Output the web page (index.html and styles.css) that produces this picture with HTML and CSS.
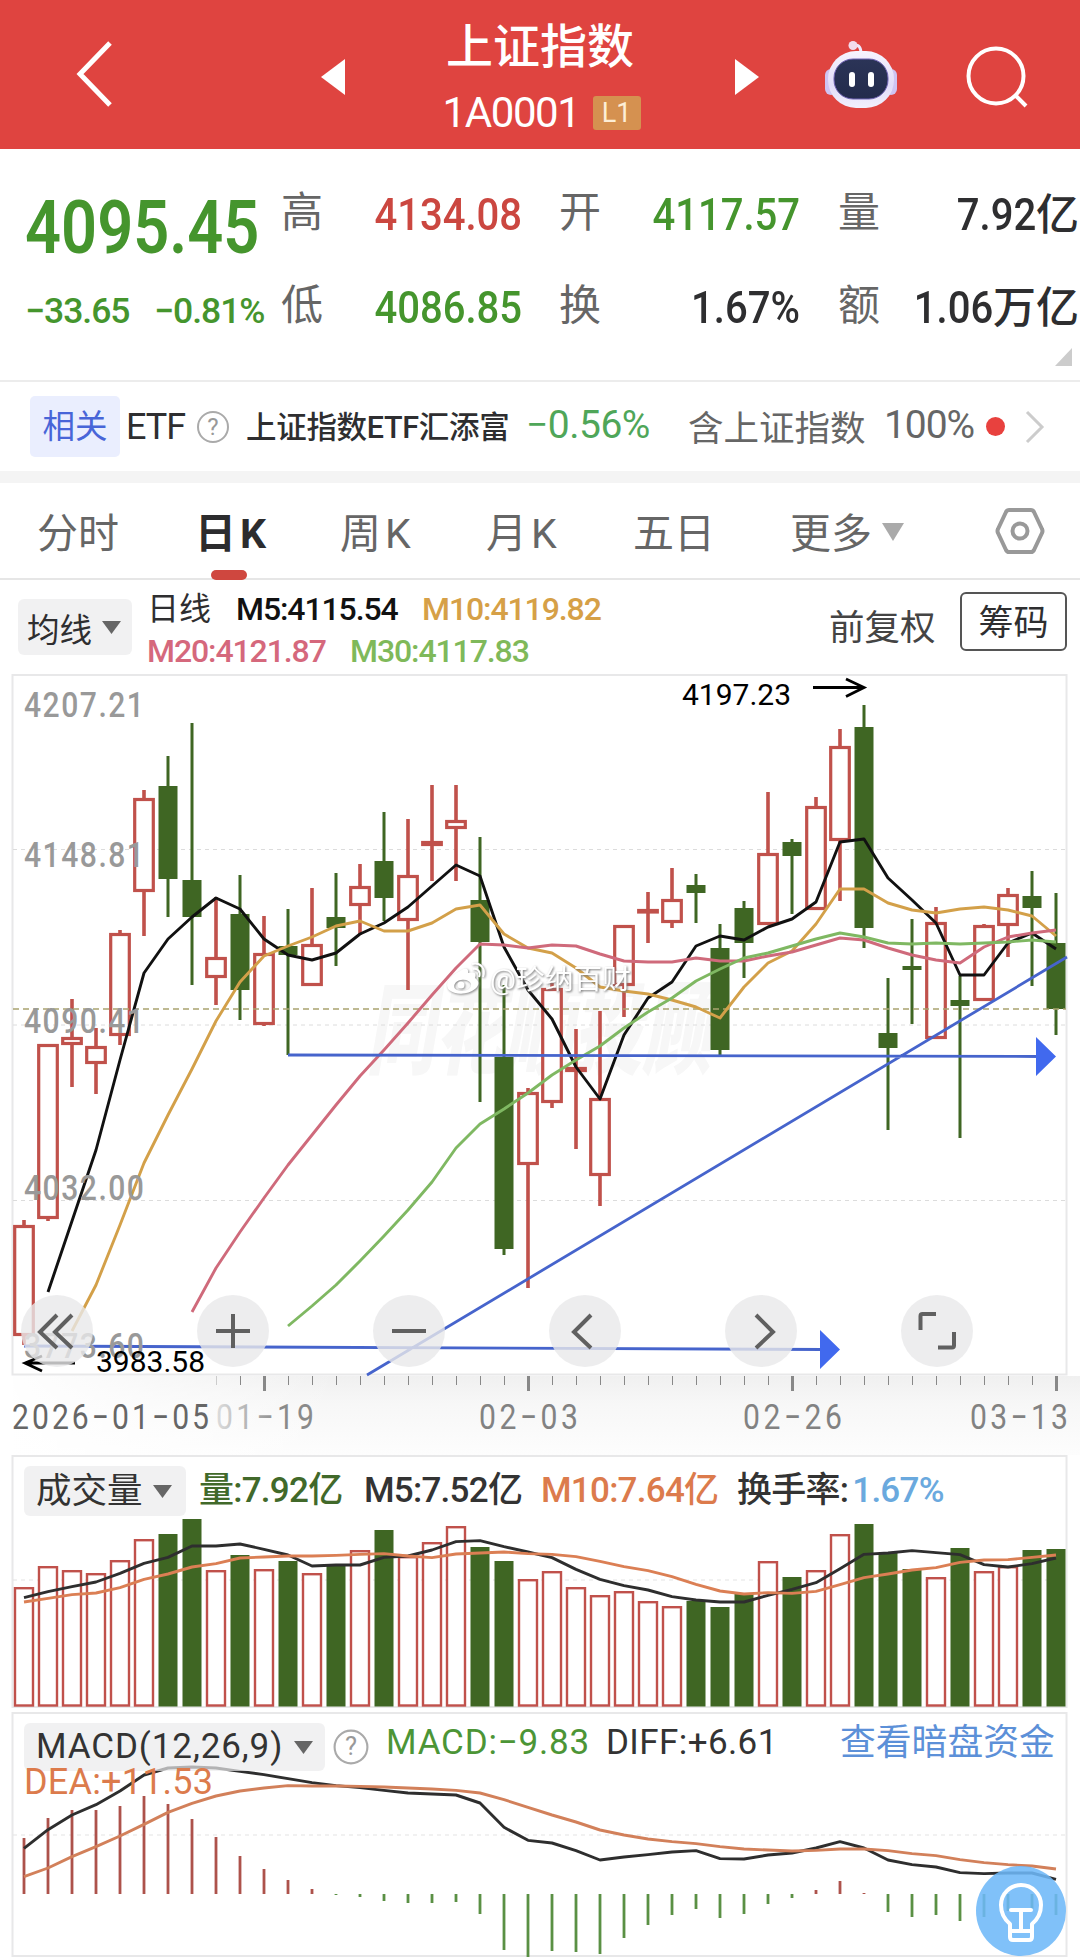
FILE: index.html
```html
<!DOCTYPE html>
<html lang="zh-CN">
<head>
<meta charset="utf-8">
<title>上证指数 1A0001</title>
<link rel="stylesheet" href="styles.css">
</head>
<body>
<header class="topbar">
  <svg class="back" width="40" height="72" viewBox="0 0 40 72"><path d="M36 5 6 36 36 67"/></svg>
  <svg class="prev" width="24" height="36" viewBox="0 0 24 36"><path d="M24 0v36L0 18z"/></svg>
  <div class="title">
    <h1>上证指数</h1>
    <div class="code"><span class="code-text">1A0001</span><span class="level">L1</span></div>
  </div>
  <svg class="next" width="24" height="36" viewBox="0 0 24 36"><path d="M0 0v36l24-18z"/></svg>
  <svg class="robot" width="74" height="70" viewBox="0 0 74 70">
    <defs>
      <linearGradient id="shell" x1="0" y1="0" x2="0" y2="1"><stop offset="0" stop-color="#f7f4ff"/><stop offset=".6" stop-color="#e2dcf8"/><stop offset="1" stop-color="#f2f0fd"/></linearGradient>
      <linearGradient id="visor" x1="0" y1="0" x2="0" y2="1"><stop offset="0" stop-color="#2b3457"/><stop offset="1" stop-color="#232b4c"/></linearGradient>
    </defs>
    <path d="M37 14C37 7 35 5 30 5" fill="none" stroke="#efeafd" stroke-width="3"/>
    <circle cx="29" cy="5.500" r="4.500" fill="#f3dcec"/>
    <rect x="1" y="29" width="12" height="26" rx="6" fill="#cfc4f2"/><rect x="61" y="29" width="12" height="26" rx="6" fill="#cfc4f2"/>
    <rect x="4" y="11" width="66" height="57" rx="28" fill="url(#shell)"/>
    <rect x="10" y="19" width="54" height="40" rx="19" fill="url(#visor)" stroke="#6f62b4" stroke-width="1"/>
    <rect x="25" y="32" width="6" height="15" rx="3" fill="#fff"/><rect x="44" y="32" width="6" height="15" rx="3" fill="#fff"/>
  </svg>
  <svg class="search" width="64" height="64" viewBox="0 0 64 64"><circle cx="31" cy="31" r="27.500"/><path d="m50 50 11 11"/></svg>
</header>

<section class="quote">
  <div class="last"><b class="price">4095.45</b><div class="change"><span>−33.65</span><span>−0.81%</span></div></div>
  <div class="pair"><span class="label">高</span><span class="val up">4134.08</span></div>
  <div class="pair"><span class="label">开</span><span class="val down">4117.57</span></div>
  <div class="pair"><span class="label">量</span><span class="amount"><span class="val">7.92</span>亿</span></div>
  <div class="pair"><span class="label">低</span><span class="val down">4086.85</span></div>
  <div class="pair"><span class="label">换</span><span class="val">1.67%</span></div>
  <div class="pair"><span class="label">额</span><span class="amount"><span class="val">1.06</span>万亿</span></div>
  <svg class="corner" width="17" height="18" viewBox="0 0 17 18"><path d="M17 0v18H0z"/></svg>
</section>

<section class="related">
  <span class="tag">相关</span>
  <span class="etf">ETF</span>
  <svg class="help" width="34" height="34" viewBox="0 0 34 34"><circle cx="17" cy="17" r="15"/><text x="17" y="25" text-anchor="middle">?</text></svg>
  <span class="fund">上证指数ETF汇添富</span>
  <span class="fund-pct">−0.56%</span>
  <span class="holding">含上证指数</span>
  <span class="share">100%</span>
  <i class="dot"></i>
  <svg class="more" width="20" height="34" viewBox="0 0 20 34"><path d="m2 2 15 15L2 32"/></svg>
</section>

<nav class="tabs">
  <span>分时</span><span class="active">日<i>K</i></span><span>周<i>K</i></span><span>月<i>K</i></span><span>五日</span>
  <span>更多<svg class="tri" width="22" height="18" viewBox="0 0 22 18"><path d="M0 0h22L11 18z"/></svg></span>
  <svg class="gear" width="50" height="48" viewBox="0 0 50 48"><path d="M14 3h22q2 0 3 2l8 17q1 2 0 4l-8 17q-1 2-3 2H14q-2 0-3-2L3 26q-1-2 0-4l8-17q1-2 3-2z"/><circle cx="25" cy="24" r="7.500"/></svg>
</nav>

<section class="legend">
  <span class="chip ma-chip">均线<svg width="19" height="13" viewBox="0 0 19 13"><path d="M0 0h19l-9.500 13z"/></svg></span>
  <div class="ma-values">
    <div class="ma-row first"><span>日线</span><span class="m5">M5:4115.54</span><span class="m10">M10:4119.82</span></div>
    <div class="ma-row"><span class="m20">M20:4121.87</span><span class="m30">M30:4117.83</span></div>
  </div>
  <span class="adjust">前复权</span>
  <span class="chips-btn">筹码</span>
</section>

<section class="panel kline">
  <svg id="kline" width="1080" height="781" viewBox="0 674 1080 781"></svg>
  <div class="controls">
    <button><svg viewBox="0 0 72 72"><path d="M36 20 19 37l17 16M51 20 34 37l17 16"/></svg></button>
    <button><svg viewBox="0 0 72 72"><path d="M36 19v34M19 36h34"/></svg></button>
    <button><svg viewBox="0 0 72 72"><path d="M19 36h34"/></svg></button>
    <button><svg viewBox="0 0 72 72"><path d="M42 20 25 37l17 16"/></svg></button>
    <button><svg viewBox="0 0 72 72"><path d="m31 20 17 17-17 16"/></svg></button>
    <button><svg viewBox="0 0 72 72"><path d="M19.500 35V21q0-2 2-2H35M37 52.500h14q2 0 2-2V37"/></svg></button>
  </div>
</section>

<section class="panel volume">
  <svg id="volume" width="1080" height="257" viewBox="0 1455 1080 257"></svg>
  <div class="volume-head">
    <span class="chip">成交量<svg width="19" height="13" viewBox="0 0 19 13"><path d="M0 0h19l-9.500 13z"/></svg></span>
    <span class="v-now">量:7.92亿</span><span>M5:7.52亿</span><span class="v-m10">M10:7.64亿</span><span>换手率:<i>1.67%</i></span>
  </div>
</section>

<section class="panel macd">
  <svg id="macd" width="1080" height="245" viewBox="0 1712 1080 245"></svg>
  <div class="macd-head">
    <span class="chip">MACD(12,26,9)<svg width="19" height="13" viewBox="0 0 19 13"><path d="M0 0h19l-9.500 13z"/></svg></span>
    <svg class="help" width="36" height="36" viewBox="0 0 34 34"><circle cx="17" cy="17" r="15.500"/><text x="17" y="25" text-anchor="middle">?</text></svg>
    <span class="c-macd">MACD:−9.83</span><span class="c-diff">DIFF:+6.61</span><span class="c-link">查看暗盘资金</span>
  </div>
  <div class="c-dea">DEA:+11.53</div>
  <svg class="bulb" width="92" height="92" viewBox="0 0 92 92"><circle class="bulb-bg" cx="46" cy="46" r="45"/><path d="M35 59C29 54 26 47 26 40a20 20 0 0 1 40 0c0 7-3 14-9 19v13q0 3-3 3H38q-3 0-3-3zM35 66h22M46 45v21M36 45h20"/></svg>
</section>
<script src="chart.js"></script>
</body>
</html>
```
FILE: styles.css
```css
* { box-sizing: border-box; }
body { margin: 0; width: 1080px; background: #fff; color: #2e2e30; font-family: Roboto, "Noto Sans CJK SC", sans-serif; overflow: hidden; }
svg { display: block; flex: none; }
span, b, i { white-space: nowrap; font-style: normal; }

.topbar { height: 149px; background: #df4440; color: #fff; display: flex; align-items: flex-start; }
.back { margin: 38px 0 0 74px; fill: none; stroke: #fff; stroke-width: 5; }
.prev { margin: 59px 0 0 207px; fill: #fff; }
.next { margin: 59px 0 0; fill: #fff; }
.title { width: 390px; display: flex; flex-direction: column; align-items: center; }
.title h1 { margin: 19px 0 0; font-size: 47px; line-height: 56px; font-weight: 500; }
.code { display: flex; align-items: center; height: 36px; margin: 20px 0 0 3px; gap: 13px; }
.code-text { font-size: 42px; line-height: 36px; letter-spacing: -1.400px; }
.level { width: 48px; height: 34px; line-height: 35px; border-radius: 3px; background: #d59150; text-align: center; font-size: 27px; color: #fdeed5; }
.robot { margin: 40px 0 0 65px; }
.search { margin: 45px 0 0 67px; fill: none; stroke: #fff; stroke-width: 4; }

.quote { height: 231px; position: relative; display: grid; padding: 19px 0 0 25px; grid-template-columns: 256px 278px 279px 242px; grid-template-rows: 93px 93px; border-bottom: 0; }
.last { grid-row: 1 / 3; color: #45952d; }
.price { display: block; margin-top: 14px; font-size: 75px; line-height: 90px; font-weight: 600; transform: scaleX(.842); transform-origin: left; }
.change { display: flex; gap: 26px; margin-top: 15px; font-size: 35.500px; line-height: 48px; font-weight: 500; }
.change span { width: 103px; letter-spacing: -1px; }
.pair { width: 241px; display: flex; justify-content: space-between; align-items: center; }
.label { font-size: 42px; line-height: 50px; color: #666; margin-top: -3px; }
.val { display: inline-block; font-size: 44.500px; line-height: 50px; font-weight: 500; transform: scaleX(.9); transform-origin: right; }
.amount { font-size: 43px; line-height: 50px; font-weight: 500; }
.up { color: #cb4740; }
.down { color: #45952d; }
.corner { position: absolute; right: 8px; bottom: 14px; fill: #ccc; }

.related { height: 103px; border-top: 2px solid #ececec; border-bottom: 12px solid #f4f4f4; display: grid; grid-template-columns: 96px 70px 50px 280px 162px 196px 102px 39px 30px; align-items: center; padding-left: 30px; }
.tag { width: 90px; height: 61px; line-height: 63px; border-radius: 5px; background: #eaeefe; color: #4865d8; font-size: 32.500px; text-align: center; }
.etf { font-size: 36px; letter-spacing: -1px; margin-top: 1px; }
.help { fill: none; stroke: #aaa; stroke-width: 2; }
.help text { font-size: 24px; fill: #999; stroke: none; }
.fund { font-size: 30.500px; letter-spacing: -.3px; font-weight: 500; margin-top: -3px; }
.fund-pct { font-size: 39px; letter-spacing: -.5px; color: #4fa659; margin-top: -4px; }
.holding { font-size: 35.500px; color: #666; margin-top: -2px; }
.share { font-size: 39px; letter-spacing: -1.100px; color: #666; margin-top: -3px; }
.dot { width: 19px; height: 19px; border-radius: 50%; background: #e8413e; margin-left: 0; }
.more { fill: none; stroke: #ccc; stroke-width: 3; margin-left: 0; }

.tabs { height: 97px; border-bottom: 2px solid #e6e6e6; display: grid; grid-template-columns: 158px 145px 146px 147px 157px 205px 60px; align-items: center; padding-left: 37px; color: #666; font-size: 41px; }
.tabs > span { position: relative; display: flex; align-items: center; line-height: 90px; height: 95px; margin-top: 3px; }
.tabs i { margin-left: 4px; }
.tabs .active { color: #2c2c2e; font-weight: 700; }
.tabs .active::after { content: ""; position: absolute; left: 16px; bottom: 1px; width: 36px; height: 10px; border-radius: 5px; background: #cf473f; }
.tri { fill: #aaa; margin: -4px 0 0 10px; }
.gear { fill: none; stroke: #999; stroke-width: 4; margin-top: -2px; }

.legend { height: 94px; display: flex; align-items: flex-start; }
.chip { display: inline-flex; align-items: center; background: rgba(235, 235, 237, .7); border-radius: 6px; fill: #666; }
.ma-chip { margin: 19px 15px 0 18px; width: 114px; height: 56px; padding-left: 9px; gap: 10px; font-size: 32.500px; }
.ma-values { width: 682px; padding-top: 10px; }
.ma-row { display: grid; grid-template-columns: 203px 1fr; height: 41px; line-height: 41px; font-size: 32px; letter-spacing: -1.100px; }
.ma-row.first { grid-template-columns: 89px 186px 1fr; line-height: 39px; }
.ma-row span { font-weight: 500; }
.ma-row.first span:first-child { font-weight: 400; letter-spacing: 0; }
.m5 { color: #111; } .m10 { color: #d6a047; } .m20 { color: #d5687c; } .m30 { color: #7fb95a; }
.adjust { width: 131px; font-size: 35.500px; line-height: 96px; color: #444; }
.chips-btn { margin-top: 12px; width: 107px; height: 59px; line-height: 60px; border: 2px solid #555; border-radius: 6px; text-align: center; font-size: 35px; }

.panel { position: relative; }
.kline { height: 781px; }
.controls { position: absolute; left: 21px; top: 621px; display: flex; gap: 104px; }
.controls button { width: 72px; height: 72px; padding: 0; border: 0; border-radius: 50%; background: rgba(233, 233, 234, .8); }
.controls svg { fill: none; stroke: #606060; stroke-width: 4; }
.volume { height: 257px; }
.volume-head { position: absolute; left: 24px; top: 11px; display: grid; grid-template-columns: 175px 165px 177px 196px 1fr; height: 48px; line-height: 50px; font-size: 35px; font-weight: 500; letter-spacing: -.75px; color: #333; }
.volume-head .chip { width: 162px; padding-left: 12px; gap: 10px; font-size: 35.500px; font-weight: 400; letter-spacing: 0; }
.v-now { color: #41692a; } .v-m10 { color: #dc7b4c; } .volume-head i { color: #6aa9de; margin-left: 4px; }
.macd { height: 245px; overflow: hidden; }
.macd-head { position: absolute; left: 24px; top: 11px; display: grid; grid-template-columns: 309px 53px 220px 234px 1fr; height: 48px; line-height: 44px; font-size: 35px; align-items: center; color: #333; }
.macd-head .chip { width: 301px; height: 48px; line-height: 52px; padding-left: 12px; gap: 11px; letter-spacing: .9px; }
.c-macd { color: #4c9536; margin-top: -8px; letter-spacing: .8px; } .c-diff { margin-top: -8px; letter-spacing: .4px; } .c-link { color: #5c90d8; font-size: 35.800px; margin-top: -9px; }
.c-dea { position: absolute; left: 24px; top: 48px; font-size: 36px; line-height: 44px; letter-spacing: .2px; color: #dc7b4c; }
.bulb { position: absolute; left: 975px; top: 153px; fill: none; stroke: #fff; stroke-width: 4; stroke-linecap: round; stroke-linejoin: round; }
.bulb-bg { fill: #6db8f8; fill-opacity: .87; stroke: none; }

.axis { font-size: 35px; fill: #828282; }
.price-label { font-size: 35px; fill: #999; font-weight: 500; }
.mark { font-size: 29.500px; fill: #000; }
.series { fill: none; stroke-width: 2.900; stroke-linejoin: round; }
.app-mark { font-size: 100px; font-weight: 900; font-style: italic; fill: #f7f7f7; }
.user-mark { font-size: 27px; fill: #fff; filter: drop-shadow(1px 1px 1px #777); }
```
FILE: chart.js
```js
const RED = '#c0514b', GREEN = '#3f6623', BLUE = '#4664cc', X = i => 24 + i * 24;

// type, high, body top, body bottom, low
const candles = `r1220,1225,1336,1345 r1044,1044,1219,1221 r999,1037,1045,1087 r1028,1046,1064,1094 r930,933,1036,1045
r790,798,892,936 g756,786,879,917 g723,880,917,985 r897,957,978,1005 g875,914,990,1020 r916,953,1025,1026
g909,946,955,1055 r888,944,986,986 g873,917,928,966 r864,886,906,935 g812,861,898,921 r819,875,921,990
r785,841,846,881 r785,820,829,881 g837,900,942,1102 g985,1057,1249,1255 r1088,1092,1165,1288 r983,988,1103,1108
r1029,1067,1072,1149 r1011,1098,1176,1206 r925,925,986,1017 r892,909,913,943 r868,899,923,928 g874,885,893,923
g924,948,1050,1055 g901,908,943,978 r792,853,925,925 g839,842,856,914 r797,806,910,910 r729,746,841,901
g705,727,928,948 g978,1033,1048,1130 g919,966,970,1024 r907,922,1039,1039 g976,1000,1006,1138 r924,925,1001,1001
r888,894,926,957 g871,896,908,986 g893,943,1009,1035`.split(/\s+/);

const volumes = `r1587 r1566 r1570 r1573 r1560 r1539 g1534 g1519 r1570 g1555 r1569 g1561 r1573 g1566 r1550 g1530 r1556 r1542
r1526 g1547 g1561 r1579 r1571 r1587 r1595 r1591 r1601 r1606 g1601 g1607 g1594 r1561 g1577 r1570 r1534 g1524 g1553 g1569
r1577 g1548 r1571 r1566 g1550 g1549`.split(/\s+/);
volumes.length = 44;

const macdBars = [1838,1818,1810,1810,1806,1796,1804,1819,1837,1856,1869,1880,1889,1895,1897,1901,1903,1903,1902,1914,
  1950,1958,1951,1952,1954,1938,1925,1915,1909,1918,1914,1904,1898,1890,1881,1893,1912,1917,1915,1921,1917,1911,1909,1915];

const ma = {
  '#111': [1, 1292,1221,1150,1060,973,939,917,898,909,939,955,960,953,934,923,907,886,865,876,947,990,1019,1067,1099,1035,998,982,946,936,940,927,919,902,842,839,878,900,923,975,975,943,933,949],
  '#d3a049': [2, 1331,1285,1225,1163,1115,1069,1021,982,956,946,937,926,921,931,931,923,909,905,934,948,953,968,987,991,994,1000,1007,1018,987,963,951,924,889,889,903,910,913,909,907,910,916,936],
  '#cf6a7b': [7, 1312,1268,1232,1198,1165,1135,1105,1076,1050,1023,995,968,944,945,948,945,946,954,961,962,962,958,961,961,956,952,945,938,940,948,955,960,963,947,937,933,930],
  '#7fb862': [11, 1326,1306,1285,1261,1236,1210,1182,1148,1124,1109,1093,1075,1060,1046,1028,1012,998,981,969,958,953,946,939,933,937,943,944,943,944,943,942,940,942]
};
const vol5 = [443,425,410,396,370,340,322,288,288,282,298,315,348,345,345,322,318,300,275,272,290,306,323,358,388,407,420,440,450,456,456,436,418,398,356,313,309,302,308,314,344,351,341,324];
const vol10 = [456,445,434,429,413,388,372,351,341,324,321,318,318,316,313,311,318,323,312,309,306,311,313,320,334,350,362,380,403,423,432,428,430,424,404,383,372,360,353,337,330,329,322,315];
const diff = [445,389,345,314,273,225,204,201,204,214,224,236,248,257,263,271,279,282,285,309,382,421,429,452,480,471,464,456,452,476,477,465,459,444,425,444,480,494,501,518,521,519,519,538];
const dea = [530,504,470,440,408,373,337,310,288,273,264,257,258,258,259,261,264,267,271,279,299,322,345,366,390,405,417,425,431,440,447,450,453,451,447,447,452,461,467,479,488,494,498,507];

const rect = (x, y, w, h, attrs) => `<rect x="${x}" y="${y}" width="${w}" height="${h}" ${attrs}/>`;
const series = (vals, start, color) => `<polyline class="series" stroke="${color}" points="${vals.map((v, i) => X(start + i) + ',' + v).join(' ')}"/>`;
const frame = (y, h) => rect(12.5, y, 1054, h, 'fill="none" stroke="#e8e8e9" stroke-width="2"');
const dash = (y, color = '#dcdcdc', pattern = '4 4', w = 1) => `<path d="M13 ${y}H1066" stroke="${color}" stroke-width="${w}" stroke-dasharray="${pattern}"/>`;
const label = (cls, x, y, w, text, extra = '') => `<text class="${cls}" x="${x}" y="${y}" textLength="${w}" lengthAdjust="spacingAndGlyphs" ${extra}>${text}</text>`;
// narrow digits set with open tracking
const digits = (cls, x, y, w, text, extra = '') => `<g transform="translate(${x} ${y}) scale(.86 1)"><text class="${cls}" textLength="${(w / .86).toFixed(1)}" lengthAdjust="spacing" ${extra}>${text}</text></g>`;

function body(x, top, bottom, red) {
  if (!red) return rect(x - 9.5, top, 19, Math.max(3, bottom - top), `fill="${GREEN}"`);
  return rect(x - 9.3, top + 1.5, 18.6, Math.max(1.5, bottom - top - 3), `fill="#fff" stroke="${RED}" stroke-width="3.2"`);
}

let k = `<defs><linearGradient id="axisbg" x1="0" y1="0" x2="0" y2="1"><stop offset="0" stop-color="#f0f0f0"/><stop offset=".35" stop-color="#f7f7f7"/><stop offset="1" stop-color="#fdfdfd"/></linearGradient>
<linearGradient id="fade"><stop offset="0" stop-color="#ddd"/><stop offset=".65" stop-color="#8a8a8a"/></linearGradient>
<linearGradient id="left"><stop offset="0" stop-color="#fff"/><stop offset="1" stop-color="#fff" stop-opacity="0"/></linearGradient></defs>`;
k += rect(13, 1376, 1067, 79, 'fill="url(#axisbg)"') + rect(0, 1376, 340, 79, 'fill="url(#left)"');
k += '<text class="app-mark" x="366" y="1066" textLength="345" lengthAdjust="spacingAndGlyphs">同花顺投顾</text>';
k += frame(675, 699.5) + dash(849.5) + dash(1025) + dash(1200.5);
candles.forEach((c, i) => {
  const red = c[0] === 'r', [hi, top, bot, lo] = c.slice(1).split(',').map(Number), x = X(i), w = red ? 3.6 : 3;
  k += rect(x - w / 2, hi, w, lo - hi, `fill="${red ? RED : GREEN}"`) + body(x, top, bot, red);
});
k += dash(1009, '#a9a36f', '6 4', 1.6);
for (const [color, [start, ...vals]] of Object.entries(ma)) k += series(vals, start, color);
k += `<g stroke="${BLUE}" stroke-width="2.8"><path d="M288 1055 1040 1056.5M24 1346 824 1349.5M367 1375 1067 957"/></g>`;
k += '<path fill="#4169ee" d="M1036 1037v39l20-19.500zM820 1330v39l20-19.500z"/>';
[['4207.21', 717], ['4148.81', 867], ['4090.41', 1033], ['4032.00', 1200], ['3773.60', 1358]].forEach(([t, y]) => k += digits('price-label', 24, y, 120, t));
k += label('mark', 682, 705, 109, '4197.23') + label('mark', 96, 1372, 109, '3983.58');
k += '<g fill="none" stroke="#000" stroke-width="2.8"><path d="M813 687.500h50M846 679l18 8.500-18 9M25 1363h50M42 1356l-17 7 17 8"/></g>';
k += '<g transform="translate(446 962)" fill="#fff" style="filter:drop-shadow(1px 1px 1px #888)"><path d="M14 9c5-4 9-3 8 2 6-2 9 0 7 5 5 3 4 8 0 11-7 6-20 6-26 1-6-7 3-15 11-19zm1 9c-7 1-9 8-4 10 7 3 15-1 14-6-1-3-5-5-10-4z" fill-rule="evenodd"/><circle cx="15" cy="23" r="3.500"/><path d="M27 7c5-1 8 3 6 8M26 2c9-2 14 5 11 13" fill="none" stroke="#fff" stroke-width="2"/></g>';
k += label('user-mark', 490, 989, 141, '@珍纳百财');
for (let x = 216; x <= 1056; x += 24) {
  const major = x % 264 === 0;
  k += rect(x - (major ? 1 : 0), 1376, major ? 3 : 1, major ? 15 : 9, `fill="${x < 240 ? '#ccc' : '#888'}"`);
}
k += digits('axis', 12, 1429, 197, '2026−01−05', 'style="fill:#666"') + digits('axis', 216, 1429, 98, '01−19', 'style="fill:url(#fade)"');
k += digits('axis', 479, 1429, 99, '02−03') + digits('axis', 743, 1429, 99, '02−26') + digits('axis', 970, 1429, 98, '03−13');
document.getElementById('kline').innerHTML = k;

let v = frame(1456, 251) + dash(1580, '#e3e3e3');
volumes.forEach((s, i) => {
  const top = +s.slice(1), x = X(i);
  v += s[0] === 'g' ? rect(x - 9.5, top, 19, 1706.5 - top, `fill="${GREEN}"`) : rect(x - 9, top + 1.2, 18, 1704.3 - top, `fill="#fff" stroke="${RED}" stroke-width="2.4"`);
});
v += series(vol5.map(y => 1450 + y / 3), 0, '#2e2e2e') + series(vol10.map(y => 1450 + y / 3), 0, '#db7f54');
document.getElementById('volume').innerHTML = v;

let m = frame(1713, 243) + dash(1835, '#e3e3e3');
macdBars.forEach((y, i) => m += rect(X(i) - 1.4, Math.min(y, 1894), 2.8, Math.abs(y - 1894), `fill="${y < 1894 ? '#ad524b' : '#5a9044'}"`));
m += series(diff.map(y => 1700 + y / 3), 0, '#2e2e2e') + series(dea.map(y => 1700 + y / 3), 0, '#d2805a');
document.getElementById('macd').innerHTML = m;
```
